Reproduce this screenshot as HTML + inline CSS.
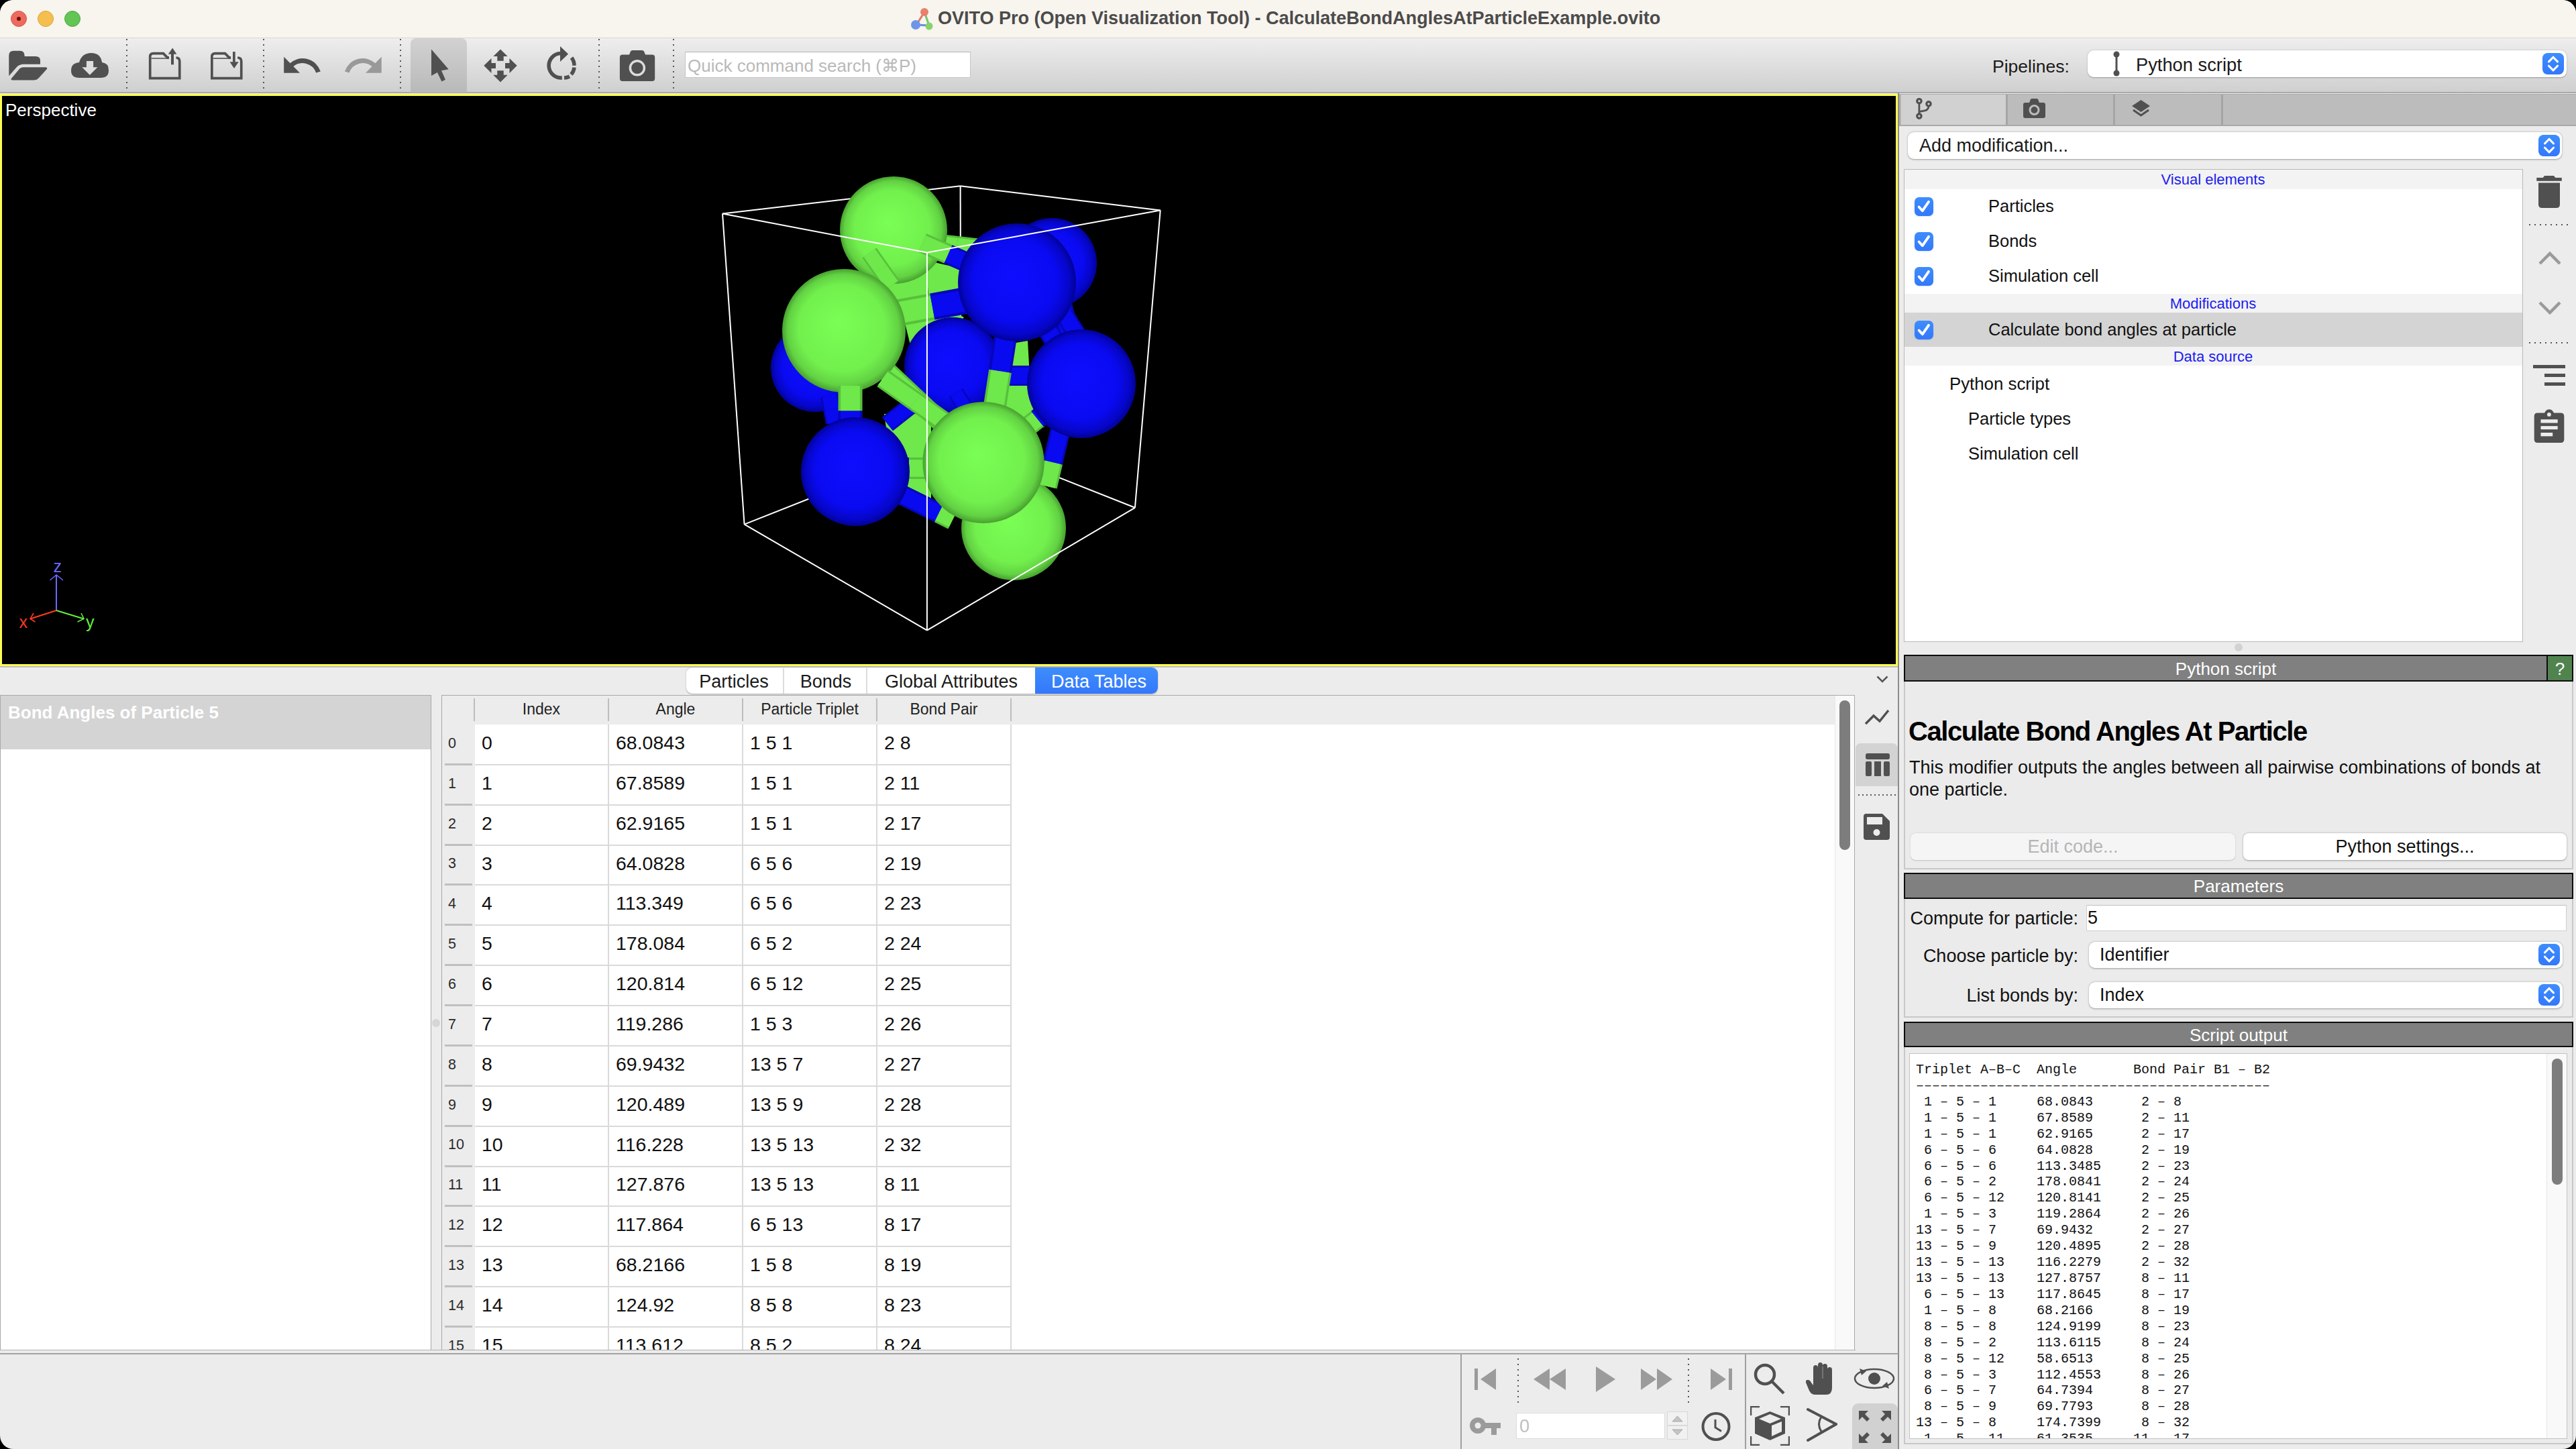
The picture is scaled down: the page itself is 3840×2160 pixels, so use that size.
<!DOCTYPE html><html><head><meta charset="utf-8"><style>
html,body{margin:0;padding:0;background:#000;width:3840px;height:2160px;overflow:hidden}
#win{position:absolute;left:0;top:0;width:3840px;height:2160px;border-radius:20px;overflow:hidden;background:#ececec;font-family:'Liberation Sans', sans-serif}
.t{position:absolute;white-space:pre}
.r{position:absolute}
</style></head><body><div id="win">
<div class="r" style="left:0px;top:0px;width:3840px;height:56px;background:#f8f4ee"></div>
<div class="r" style="left:0px;top:56px;width:3840px;height:1px;background:#d9d6d1"></div>
<div class="r" style="left:16px;top:16px;width:24px;height:24px;background:#ee6a5f;border-radius:50%;box-sizing:border-box;border:1px solid #d1574c"></div>
<div class="r" style="left:56px;top:16px;width:24px;height:24px;background:#f5bf4f;border-radius:50%;box-sizing:border-box;border:1px solid #d9a23a"></div>
<div class="r" style="left:96px;top:16px;width:24px;height:24px;background:#62c554;border-radius:50%;box-sizing:border-box;border:1px solid #4ea83f"></div>
<div class="r" style="left:25px;top:25px;width:6px;height:6px;background:#6a100c;border-radius:50%"></div>
<svg class="r" style="left:1356px;top:10px" width="36" height="36" viewBox="0 0 36 36"><line x1="22" y1="8" x2="10" y2="27" stroke="#e07a6a" stroke-width="3"/><line x1="22" y1="8" x2="29" y2="28" stroke="#7ac070" stroke-width="3"/><line x1="10" y1="27" x2="29" y2="28" stroke="#6a8fd8" stroke-width="3"/><circle cx="22" cy="8" r="6" fill="#e8806e"/><circle cx="9" cy="27" r="7" fill="#6e96e8"/><circle cx="29" cy="29" r="5.5" fill="#86d36e"/></svg>
<div class="t" style="left:1398px;top:14.1px;font-size:27px;line-height:27px;color:#4b4b4b;font-weight:bold;font-family:'Liberation Sans', sans-serif;">OVITO Pro (Open Visualization Tool) - CalculateBondAnglesAtParticleExample.ovito</div>
<div class="r" style="left:0px;top:57px;width:3840px;height:81px;background:linear-gradient(#eeeeee,#cfcfcf)"></div>
<div class="r" style="left:0px;top:137px;width:3840px;height:2px;background:#a9a9a9"></div>
<div class="r" style="left:612px;top:57px;width:84px;height:81px;background:linear-gradient(#d2d2d2,#b9b9b9);border-radius:8px 8px 0 0"></div>
<div class="r" style="left:188px;top:58px;width:2px;height:78px;background:repeating-linear-gradient(#555 0 2px,transparent 2px 8px)"></div>
<div class="r" style="left:392px;top:58px;width:2px;height:78px;background:repeating-linear-gradient(#555 0 2px,transparent 2px 8px)"></div>
<div class="r" style="left:596px;top:58px;width:2px;height:78px;background:repeating-linear-gradient(#555 0 2px,transparent 2px 8px)"></div>
<div class="r" style="left:892px;top:58px;width:2px;height:78px;background:repeating-linear-gradient(#555 0 2px,transparent 2px 8px)"></div>
<div class="r" style="left:1003px;top:58px;width:2px;height:78px;background:repeating-linear-gradient(#555 0 2px,transparent 2px 8px)"></div>
<svg class="r" style="left:13px;top:75px" width="58" height="46" viewBox="0 0 58 46"><path d="M0.3 8 Q0.3 0.8 7.3 0.8 L17 0.8 Q23.7 0.8 23.7 8.9 L40 8.9 Q47 8.9 47 15 L47 20.7 L21.2 20.7 Q15 21 11.5 25.6 L0.3 38.2 Z" fill="#505050"/><path d="M22 25.3 L55.5 25.3 Q58.3 25.8 56.6 28.2 L45 41 Q41.8 44.5 37 44.5 L5.5 44.5 Q2.3 44.3 4.2 41.8 L14.5 29.5 Q17.5 25.3 22 25.3 Z" fill="#505050"/></svg>
<svg class="r" style="left:106px;top:79px" width="56" height="37" viewBox="0 0 56 37"><path d="M12 37 Q0 37 0 26 Q0 15 12 14 Q16 0 30 0 Q44 0 46 14 Q56 15 56 26 Q56 37 44 37 Z" fill="#505050"/><path d="M22.9 11.9 L33.1 11.9 L33.1 21.3 L39.4 21.3 L27.8 32.8 L16.3 21.3 L22.9 21.3 Z" fill="#dedede"/></svg>
<svg class="r" style="left:210px;top:60px" width="160" height="70" viewBox="0 0 160 70"><g fill="none" stroke="#505050" stroke-width="3.7"><path d="M52.5 26 Q57.75 26 57.75 31.5 L57.75 56.6 L13.7 56.6 L13.7 24.5 Q13.7 19.6 18.6 19.6 L33.4 19.6 L39.6 25.8 L41.7 25.8"/><path d="M144.1 26 Q149.75 26 149.75 31.5 L149.75 56.6 L105.85 56.6 L105.85 24.5 Q105.85 19.6 110.75 19.6 L125.5 19.6 L131.6 25.8 L133.9 25.8"/></g><g stroke="#505050" stroke-width="1.6"><line x1="15.5" y1="27" x2="41.7" y2="27"/><line x1="107.5" y1="27" x2="133.9" y2="27"/></g><g fill="#505050"><rect x="39.5" y="24" width="2.4" height="3.8"/><rect x="131.6" y="24" width="2.5" height="3.8"/><rect x="45" y="20" width="4" height="16.3"/><path d="M40.7 20.8 L47.2 11.5 L53.4 20.8 Z"/><rect x="137" y="17.1" width="3.7" height="15.6"/><path d="M132.6 32.3 L145.7 32.3 L139 41.9 Z"/></g></svg>
<svg class="r" style="left:410px;top:60px" width="170" height="70" viewBox="0 0 170 70"><path d="M13.2 24.7 L13.2 48.8 L37 48.8 Z" fill="#505050"/><path d="M23.5 37.8 A24.8 24.8 0 0 1 64.5 47.5" fill="none" stroke="#505050" stroke-width="7"/><path d="M158.7 24.7 L158.7 48.8 L135 48.8 Z" fill="#999"/><path d="M148.2 37.8 A24.8 24.8 0 0 0 107.2 47.5" fill="none" stroke="#999" stroke-width="7"/></svg>
<svg class="r" style="left:630px;top:60px" width="240" height="70" viewBox="0 0 240 70"><g transform="translate(-630,-60)"><path d="M643 73.5 L668.7 103.3 L658 105.2 L664 118.7 L658.4 121.5 L651.9 108 L643 113.1 Z" fill="#505050"/><path d="M746 73.5 L756.7 84 L750.7 84 L750.7 90.7 L741.3 90.7 L741.3 84 L735.3 84 Z M721.3 97.7 L732.5 87 L732.5 94 L739 94 L739 102 L732.5 102 L732.5 108.9 Z M770.7 97.7 L759.5 87 L759.5 94 L753 94 L753 102 L759.5 102 L759.5 108.9 Z M746 122.4 L735.3 111.7 L741.3 111.7 L741.3 105.2 L750.7 105.2 L750.7 111.7 L756.7 111.7 Z" fill="#505050"/><path d="M835 79.5 A18.2 18.2 0 1 0 837.8 115.9" fill="none" stroke="#505050" stroke-width="5.6"/><path d="M852 86 A18.2 18.2 0 0 1 856 97.7 M856 100.5 A18.2 18.2 0 0 1 851.5 111 M849 114 A18.2 18.2 0 0 1 841 116" fill="none" stroke="#505050" stroke-width="5.6"/><path d="M835 68.9 L847.1 80.5 L835 92.1 Z" fill="#505050"/></g></svg>
<svg class="r" style="left:910px;top:65px" width="80" height="65" viewBox="0 0 80 65"><path d="M17.9 16.4 L28 16.4 L30 11.5 Q30.7 9.9 33 9.9 L47 9.9 Q49.3 9.9 50 11.5 L52 16.4 L62.2 16.4 Q66.2 16.4 66.2 20.4 L66.2 51.9 Q66.2 55.9 62.2 55.9 L17.9 55.9 Q13.9 55.9 13.9 51.9 L13.9 20.4 Q13.9 16.4 17.9 16.4 Z" fill="#505050"/><circle cx="39.9" cy="36.3" r="10.5" fill="none" stroke="#dcdcdc" stroke-width="3.5"/></svg>
<div class="r" style="left:1021px;top:77px;width:426px;height:39px;background:#fff;box-sizing:border-box;border:1px solid #c6c6c6;border-top-color:#b5b5b5"></div>
<div class="t" style="left:1025px;top:85.0px;font-size:26px;line-height:26px;color:#b9b9b9;font-weight:normal;font-family:'Liberation Sans', sans-serif;">Quick command search (&#8984;P)</div>
<div class="t" style="left:2970px;top:85.6px;font-size:26.5px;line-height:26.5px;color:#1a1a1a;font-weight:normal;font-family:'Liberation Sans', sans-serif;">Pipelines:</div>
<div class="r" style="left:3112px;top:75px;width:714px;height:40px;background:#fff;border-radius:9px;box-shadow:0 0.5px 2px rgba(0,0,0,0.3)"></div>
<svg class="r" style="left:3145px;top:76px" width="20" height="38" viewBox="0 0 20 38"><line x1="10" y1="5" x2="10" y2="33" stroke="#505050" stroke-width="3"/><circle cx="10" cy="5" r="4.5" fill="#505050"/><circle cx="10" cy="33" r="4.5" fill="#505050"/></svg>
<div class="t" style="left:3184px;top:82.9px;font-size:27.3px;line-height:27.3px;color:#1a1a1a;font-weight:normal;font-family:'Liberation Sans', sans-serif;">Python script</div>
<div class="r" style="left:3790px;top:79px;width:32px;height:32px;background:linear-gradient(#3e8dfd,#3378fb);border-radius:7.5px"></div>
<svg class="r" style="left:3790px;top:79px" width="32" height="32" viewBox="0 0 32 32"><path d="M9.5 12.9 L16 6.2 L22.5 12.9 M9.5 19.2 L16 25.9 L22.5 19.2" fill="none" stroke="#fff" stroke-width="3" stroke-linecap="round" stroke-linejoin="round"/></svg>
<div class="r" style="left:0px;top:140px;width:2829px;height:853px;background:#ffff55"></div>
<div class="r" style="left:3px;top:143px;width:2823px;height:847px;background:#000"></div>
<div class="t" style="left:8px;top:151.0px;font-size:26px;line-height:26px;color:#fff;font-weight:normal;font-family:'Liberation Sans', sans-serif;">Perspective</div>
<div class="r" style="left:0px;top:993px;width:2829px;height:2px;background:#bcbcbc"></div>
<div class="r" style="left:0px;top:995px;width:2829px;height:1px;background:#f2f2f2"></div>
<svg class="r" style="left:0;top:0" width="2829" height="993" viewBox="0 0 2829 993"><defs><clipPath id="vpc"><rect x="3" y="143" width="2823" height="847"/></clipPath></defs><g clip-path="url(#vpc)"><defs>
<radialGradient id="gG" cx="0.5" cy="0.5" r="0.5" fx="0.45" fy="0.43"><stop offset="0" stop-color="#7aff55"/><stop offset="0.7" stop-color="#72f04d"/><stop offset="0.9" stop-color="#62d243"/><stop offset="1" stop-color="#48a030"/></radialGradient>
<radialGradient id="gB" cx="0.5" cy="0.5" r="0.5" fx="0.45" fy="0.43"><stop offset="0" stop-color="#0e0eff"/><stop offset="0.7" stop-color="#0a0af2"/><stop offset="0.9" stop-color="#0606c8"/><stop offset="1" stop-color="#020296"/></radialGradient>
</defs><line x1="1431.6" y1="277.3" x2="1432.5" y2="654" stroke="#fff" stroke-width="2"/><line x1="1432.5" y1="654" x2="1109.6" y2="781.6" stroke="#fff" stroke-width="2"/><line x1="1432.5" y1="654" x2="1691.9" y2="756.8" stroke="#fff" stroke-width="2"/><line x1="1077" y1="318.5" x2="1431.6" y2="277.3" stroke="#fff" stroke-width="2"/><line x1="1431.6" y1="277.3" x2="1729.7" y2="313.5" stroke="#fff" stroke-width="2"/><polygon points="1343,458 1388,448 1437,473 1417,498 1358,518" fill="#6ee84a"/><polygon points="1318,420 1345,416 1382,405 1384,452 1340,454" fill="#6ee84a"/><polygon points="1380,388 1432,400 1432,432 1384,442" fill="#6ee84a"/><polygon points="1472,518 1532,508 1537,598 1557,637 1487,617" fill="#6ee84a"/><polygon points="1318,617 1388,617 1388,761 1338,751 1328,687" fill="#6ee84a"/><line x1="1568" y1="392" x2="1590.0" y2="482.0" stroke="#0606b8" stroke-width="30"/><line x1="1590.0" y1="482.0" x2="1612" y2="572" stroke="#0606b8" stroke-width="30"/><line x1="1568" y1="392" x2="1590.0" y2="482.0" stroke="#0a0af0" stroke-width="24.0"/><line x1="1590.0" y1="482.0" x2="1612" y2="572" stroke="#0a0af0" stroke-width="24.0"/><circle cx="1568" cy="392" r="67" fill="url(#gB)"/><circle cx="1215" cy="548" r="66" fill="url(#gB)"/><line x1="1236" y1="590" x2="1240.0" y2="610.0" stroke="#0606b8" stroke-width="26"/><line x1="1240.0" y1="610.0" x2="1244" y2="630" stroke="#0606b8" stroke-width="26"/><line x1="1236" y1="590" x2="1240.0" y2="610.0" stroke="#0a0af0" stroke-width="20.8"/><line x1="1240.0" y1="610.0" x2="1244" y2="630" stroke="#0a0af0" stroke-width="20.8"/><circle cx="1420" cy="545" r="72" fill="url(#gB)"/><circle cx="1511" cy="787" r="78" fill="url(#gG)"/><line x1="1323" y1="632" x2="1339.5" y2="619.0" stroke="#0606b8" stroke-width="26"/><line x1="1339.5" y1="619.0" x2="1356" y2="606" stroke="#0606b8" stroke-width="26"/><line x1="1323" y1="632" x2="1339.5" y2="619.0" stroke="#0a0af0" stroke-width="20.8"/><line x1="1339.5" y1="619.0" x2="1356" y2="606" stroke="#0a0af0" stroke-width="20.8"/><line x1="1425" y1="585" x2="1432.5" y2="597.5" stroke="#0606b8" stroke-width="24"/><line x1="1432.5" y1="597.5" x2="1440" y2="610" stroke="#0606b8" stroke-width="24"/><line x1="1425" y1="585" x2="1432.5" y2="597.5" stroke="#0a0af0" stroke-width="19.2"/><line x1="1432.5" y1="597.5" x2="1440" y2="610" stroke="#0a0af0" stroke-width="19.2"/><line x1="1383" y1="362" x2="1426.5" y2="367.0" stroke="#58c03c" stroke-width="30"/><line x1="1426.5" y1="367.0" x2="1470" y2="372" stroke="#58c03c" stroke-width="30"/><line x1="1383" y1="362" x2="1426.5" y2="367.0" stroke="#6ee84a" stroke-width="24.0"/><line x1="1426.5" y1="367.0" x2="1470" y2="372" stroke="#6ee84a" stroke-width="24.0"/><line x1="1586" y1="468" x2="1596.0" y2="484.0" stroke="#0606b8" stroke-width="28"/><line x1="1596.0" y1="484.0" x2="1606" y2="500" stroke="#0606b8" stroke-width="28"/><line x1="1586" y1="468" x2="1596.0" y2="484.0" stroke="#0a0af0" stroke-width="22.4"/><line x1="1596.0" y1="484.0" x2="1606" y2="500" stroke="#0a0af0" stroke-width="22.4"/><line x1="1500" y1="560" x2="1520.0" y2="560.0" stroke="#0606b8" stroke-width="30"/><line x1="1520.0" y1="560.0" x2="1540" y2="560" stroke="#0606b8" stroke-width="30"/><line x1="1500" y1="560" x2="1520.0" y2="560.0" stroke="#0a0af0" stroke-width="24.0"/><line x1="1520.0" y1="560.0" x2="1540" y2="560" stroke="#0a0af0" stroke-width="24.0"/><line x1="1516" y1="419" x2="1564.0" y2="495.5" stroke="#0606b8" stroke-width="30"/><line x1="1564.0" y1="495.5" x2="1612" y2="572" stroke="#0606b8" stroke-width="30"/><line x1="1516" y1="419" x2="1564.0" y2="495.5" stroke="#0a0af0" stroke-width="24.0"/><line x1="1564.0" y1="495.5" x2="1612" y2="572" stroke="#0a0af0" stroke-width="24.0"/><line x1="1612" y1="572" x2="1546.3" y2="624.65" stroke="#0606b8" stroke-width="30"/><line x1="1546.3" y1="624.65" x2="1466" y2="689" stroke="#58c03c" stroke-width="30"/><line x1="1612" y1="572" x2="1546.3" y2="624.65" stroke="#0a0af0" stroke-width="24.0"/><line x1="1546.3" y1="624.65" x2="1466" y2="689" stroke="#6ee84a" stroke-width="24.0"/><line x1="1581" y1="640" x2="1569.4" y2="689.3" stroke="#0606b8" stroke-width="30"/><line x1="1569.4" y1="689.3" x2="1561" y2="725" stroke="#58c03c" stroke-width="30"/><line x1="1581" y1="640" x2="1569.4" y2="689.3" stroke="#0a0af0" stroke-width="24.0"/><line x1="1569.4" y1="689.3" x2="1561" y2="725" stroke="#6ee84a" stroke-width="24.0"/><line x1="1274" y1="703" x2="1399.56" y2="764.92" stroke="#0606b8" stroke-width="30"/><line x1="1399.56" y1="764.92" x2="1420" y2="775" stroke="#58c03c" stroke-width="30"/><line x1="1274" y1="703" x2="1399.56" y2="764.92" stroke="#0a0af0" stroke-width="24.0"/><line x1="1399.56" y1="764.92" x2="1420" y2="775" stroke="#6ee84a" stroke-width="24.0"/><line x1="1258" y1="493" x2="1362.0" y2="591.0" stroke="#58c03c" stroke-width="30"/><line x1="1362.0" y1="591.0" x2="1466" y2="689" stroke="#58c03c" stroke-width="30"/><line x1="1258" y1="493" x2="1362.0" y2="591.0" stroke="#6ee84a" stroke-width="24.0"/><line x1="1362.0" y1="591.0" x2="1466" y2="689" stroke="#6ee84a" stroke-width="24.0"/><circle cx="1332" cy="343" r="80" fill="url(#gG)"/><line x1="1296" y1="377" x2="1313.0" y2="401.0" stroke="#58c03c" stroke-width="26"/><line x1="1313.0" y1="401.0" x2="1330" y2="425" stroke="#58c03c" stroke-width="26"/><line x1="1296" y1="377" x2="1313.0" y2="401.0" stroke="#6ee84a" stroke-width="20.8"/><line x1="1313.0" y1="401.0" x2="1330" y2="425" stroke="#6ee84a" stroke-width="20.8"/><line x1="1375" y1="362" x2="1413.5" y2="379.0" stroke="#58c03c" stroke-width="30"/><line x1="1413.5" y1="379.0" x2="1452" y2="396" stroke="#0606b8" stroke-width="30"/><line x1="1375" y1="362" x2="1413.5" y2="379.0" stroke="#6ee84a" stroke-width="24.0"/><line x1="1413.5" y1="379.0" x2="1452" y2="396" stroke="#0a0af0" stroke-width="24.0"/><line x1="1330" y1="468" x2="1389.8" y2="457.08" stroke="#58c03c" stroke-width="40"/><line x1="1389.8" y1="457.08" x2="1445" y2="447" stroke="#0606b8" stroke-width="40"/><line x1="1330" y1="468" x2="1389.8" y2="457.08" stroke="#6ee84a" stroke-width="32.0"/><line x1="1389.8" y1="457.08" x2="1445" y2="447" stroke="#0a0af0" stroke-width="32.0"/><line x1="1500" y1="495" x2="1490.99" y2="553.3" stroke="#0606b8" stroke-width="34"/><line x1="1490.99" y1="553.3" x2="1483" y2="605" stroke="#58c03c" stroke-width="34"/><line x1="1500" y1="495" x2="1490.99" y2="553.3" stroke="#0a0af0" stroke-width="27.2"/><line x1="1490.99" y1="553.3" x2="1483" y2="605" stroke="#6ee84a" stroke-width="27.2"/><circle cx="1516" cy="421" r="88" fill="url(#gB)"/><circle cx="1612" cy="572" r="81" fill="url(#gB)"/><circle cx="1258" cy="493" r="92" fill="url(#gG)"/><line x1="1267.5" y1="575" x2="1267.5" y2="612.5" stroke="#58c03c" stroke-width="36"/><line x1="1267.5" y1="612.5" x2="1267.5" y2="650" stroke="#0606b8" stroke-width="36"/><line x1="1267.5" y1="575" x2="1267.5" y2="612.5" stroke="#6ee84a" stroke-width="28.8"/><line x1="1267.5" y1="612.5" x2="1267.5" y2="650" stroke="#0a0af0" stroke-width="28.8"/><line x1="1316" y1="564" x2="1364.0" y2="598.0" stroke="#58c03c" stroke-width="30"/><line x1="1364.0" y1="598.0" x2="1412" y2="632" stroke="#58c03c" stroke-width="30"/><line x1="1316" y1="564" x2="1364.0" y2="598.0" stroke="#6ee84a" stroke-width="24.0"/><line x1="1364.0" y1="598.0" x2="1412" y2="632" stroke="#6ee84a" stroke-width="24.0"/><line x1="1320" y1="698" x2="1355.0" y2="698.0" stroke="#0606b8" stroke-width="32"/><line x1="1355.0" y1="698.0" x2="1390" y2="698" stroke="#58c03c" stroke-width="32"/><line x1="1320" y1="698" x2="1355.0" y2="698.0" stroke="#0a0af0" stroke-width="25.6"/><line x1="1355.0" y1="698.0" x2="1390" y2="698" stroke="#6ee84a" stroke-width="25.6"/><circle cx="1275" cy="703" r="81" fill="url(#gB)"/><circle cx="1466" cy="689.5" r="90.6" fill="url(#gG)"/><line x1="1077" y1="318.5" x2="1381.9" y2="376.6" stroke="#fff" stroke-width="2"/><line x1="1381.9" y1="376.6" x2="1729.7" y2="313.5" stroke="#fff" stroke-width="2"/><line x1="1381.9" y1="376.6" x2="1381.9" y2="939.6" stroke="#fff" stroke-width="2"/><line x1="1077" y1="318.5" x2="1109.6" y2="781.6" stroke="#fff" stroke-width="2"/><line x1="1729.7" y1="313.5" x2="1691.9" y2="756.8" stroke="#fff" stroke-width="2"/><line x1="1109.6" y1="781.6" x2="1381.9" y2="939.6" stroke="#fff" stroke-width="2"/><line x1="1381.9" y1="939.6" x2="1691.9" y2="756.8" stroke="#fff" stroke-width="2"/></g></svg>
<svg class="r" style="left:20px;top:835px" width="130" height="110" viewBox="0 0 130 110"><g transform="translate(-20,-835)"><line x1="84" y1="910" x2="84" y2="857" stroke="#6a6aff" stroke-width="2"/><path d="M74.5 865 L84 857 L94 865" fill="none" stroke="#6a6aff" stroke-width="1.5"/><line x1="84" y1="910" x2="45" y2="922.5" stroke="#ff3a22" stroke-width="2"/><path d="M50 914 L45 922.5 L52.5 927" fill="none" stroke="#ff3a22" stroke-width="1.5"/><line x1="84" y1="910" x2="125" y2="922.5" stroke="#66f03a" stroke-width="2"/><path d="M121 914 L125 922.5 L115.5 927" fill="none" stroke="#66f03a" stroke-width="1.5"/></g></svg>
<div class="t" style="left:79.5px;top:831.8px;font-size:25px;line-height:25px;color:#6a6aff;font-weight:normal;font-family:'Liberation Sans', sans-serif;">z</div>
<div class="t" style="left:28.5px;top:914.8px;font-size:25px;line-height:25px;color:#ff3a22;font-weight:normal;font-family:'Liberation Sans', sans-serif;">x</div>
<div class="t" style="left:128px;top:914.8px;font-size:25px;line-height:25px;color:#66f03a;font-weight:normal;font-family:'Liberation Sans', sans-serif;">y</div>
<div class="r" style="left:2829px;top:138px;width:2px;height:2022px;background:#8c8c8c"></div>
<div class="r" style="left:2831px;top:140px;width:1009px;height:48px;background:#a9a9a9"></div>
<div class="r" style="left:2833px;top:141px;width:1007px;height:45px;background:#bcbcbc"></div>
<div class="r" style="left:2834px;top:141px;width:156px;height:45px;background:#d1d1d1"></div>
<div class="r" style="left:2990px;top:141px;width:3px;height:45px;background:#a5a5a5"></div>
<div class="r" style="left:3150px;top:141px;width:3px;height:45px;background:#a5a5a5"></div>
<div class="r" style="left:3311px;top:141px;width:3px;height:45px;background:#a5a5a5"></div>
<svg class="r" style="left:2840px;top:140px" width="60" height="50" viewBox="0 0 60 50"><g fill="none" stroke="#505050"><line x1="20.9" y1="13.8" x2="20.9" y2="30" stroke-width="2.8"/><path d="M35 17 Q35 23.8 29.5 24.8 L21.5 26.3" stroke-width="2.8"/><circle cx="20.9" cy="10.7" r="3.2" stroke-width="3.2"/><circle cx="35" cy="14.8" r="3.2" stroke-width="3.2"/><circle cx="20.9" cy="33.1" r="3.2" stroke-width="3.2"/></g></svg>
<svg class="r" style="left:3016px;top:147px" width="33" height="29" viewBox="0 0 33 29"><path d="M3 6 L9 6 L11 1 Q12 0 13 0 L20 0 Q21 0 22 1 L24 6 L30 6 Q33 6 33 9 L33 26 Q33 29 30 29 L3 29 Q0 29 0 26 L0 9 Q0 6 3 6 Z" fill="#505050"/><circle cx="16.5" cy="17" r="6.5" fill="none" stroke="#bcbcbc" stroke-width="3"/></svg>
<svg class="r" style="left:3178px;top:149px" width="27" height="26" viewBox="0 0 27 26"><path d="M13.5 0 L27 9 L13.5 18 L0 9 Z" fill="#505050"/><path d="M2 15 L13.5 23 L25 15" fill="none" stroke="#505050" stroke-width="3"/></svg>
<div class="r" style="left:2844px;top:197px;width:975px;height:40px;background:#fff;border-radius:9px;box-shadow:0 0.5px 2.5px rgba(0,0,0,0.35)"></div>
<div class="t" style="left:2861px;top:204.1px;font-size:27px;line-height:27px;color:#1a1a1a;font-weight:normal;font-family:'Liberation Sans', sans-serif;">Add modification...</div>
<div class="r" style="left:3784px;top:201px;width:32px;height:32px;background:linear-gradient(#3e8dfd,#3378fb);border-radius:7.5px"></div>
<svg class="r" style="left:3784px;top:201px" width="32" height="32" viewBox="0 0 32 32"><path d="M9.5 12.9 L16 6.2 L22.5 12.9 M9.5 19.2 L16 25.9 L22.5 19.2" fill="none" stroke="#fff" stroke-width="3" stroke-linecap="round" stroke-linejoin="round"/></svg>
<div class="r" style="left:2838px;top:252px;width:923px;height:705px;background:#fff;box-sizing:border-box;border:1px solid #b9b9b9"></div>
<div class="r" style="left:2839px;top:253px;width:921px;height:29px;background:#f3f3f3"></div>
<div class="t" style="left:2899.0px;width:800px;text-align:center;top:257.4px;font-size:22px;line-height:22px;color:#1c1cf0;font-weight:normal;">Visual elements</div>
<div class="r" style="left:2839px;top:438px;width:921px;height:28px;background:#f3f3f3"></div>
<div class="t" style="left:2899.0px;width:800px;text-align:center;top:442.4px;font-size:22px;line-height:22px;color:#1c1cf0;font-weight:normal;">Modifications</div>
<div class="r" style="left:2839px;top:466px;width:921px;height:51px;background:#d4d4d4"></div>
<div class="r" style="left:2839px;top:517px;width:921px;height:28px;background:#f3f3f3"></div>
<div class="t" style="left:2899.0px;width:800px;text-align:center;top:521.4px;font-size:22px;line-height:22px;color:#1c1cf0;font-weight:normal;">Data source</div>
<div class="r" style="left:2854px;top:294px;width:28px;height:28px;background:linear-gradient(#3e8dfd,#3378fb);border-radius:6.5px;box-shadow:0 1px 2px rgba(40,110,250,0.18)"></div>
<svg class="r" style="left:2854px;top:294px" width="28" height="28" viewBox="0 0 28 28"><path d="M6.6 14.4 L11.8 20.2 L21 6.8" fill="none" stroke="#fff" stroke-width="3.8" stroke-linecap="round" stroke-linejoin="round"/></svg>
<div class="t" style="left:2964px;top:295.4px;font-size:25.5px;line-height:25.5px;color:#111;font-weight:normal;font-family:'Liberation Sans', sans-serif;">Particles</div>
<div class="r" style="left:2854px;top:346px;width:28px;height:28px;background:linear-gradient(#3e8dfd,#3378fb);border-radius:6.5px;box-shadow:0 1px 2px rgba(40,110,250,0.18)"></div>
<svg class="r" style="left:2854px;top:346px" width="28" height="28" viewBox="0 0 28 28"><path d="M6.6 14.4 L11.8 20.2 L21 6.8" fill="none" stroke="#fff" stroke-width="3.8" stroke-linecap="round" stroke-linejoin="round"/></svg>
<div class="t" style="left:2964px;top:347.4px;font-size:25.5px;line-height:25.5px;color:#111;font-weight:normal;font-family:'Liberation Sans', sans-serif;">Bonds</div>
<div class="r" style="left:2854px;top:398px;width:28px;height:28px;background:linear-gradient(#3e8dfd,#3378fb);border-radius:6.5px;box-shadow:0 1px 2px rgba(40,110,250,0.18)"></div>
<svg class="r" style="left:2854px;top:398px" width="28" height="28" viewBox="0 0 28 28"><path d="M6.6 14.4 L11.8 20.2 L21 6.8" fill="none" stroke="#fff" stroke-width="3.8" stroke-linecap="round" stroke-linejoin="round"/></svg>
<div class="t" style="left:2964px;top:399.4px;font-size:25.5px;line-height:25.5px;color:#111;font-weight:normal;font-family:'Liberation Sans', sans-serif;">Simulation cell</div>
<div class="r" style="left:2854px;top:478px;width:28px;height:28px;background:linear-gradient(#3e8dfd,#3378fb);border-radius:6.5px;box-shadow:0 1px 2px rgba(40,110,250,0.18)"></div>
<svg class="r" style="left:2854px;top:478px" width="28" height="28" viewBox="0 0 28 28"><path d="M6.6 14.4 L11.8 20.2 L21 6.8" fill="none" stroke="#fff" stroke-width="3.8" stroke-linecap="round" stroke-linejoin="round"/></svg>
<div class="t" style="left:2964px;top:479.4px;font-size:25.5px;line-height:25.5px;color:#111;font-weight:normal;font-family:'Liberation Sans', sans-serif;">Calculate bond angles at particle</div>
<div class="t" style="left:2906px;top:560.2px;font-size:25.8px;line-height:25.8px;color:#111;font-weight:normal;font-family:'Liberation Sans', sans-serif;">Python script</div>
<div class="t" style="left:2934px;top:612.4px;font-size:25.5px;line-height:25.5px;color:#111;font-weight:normal;font-family:'Liberation Sans', sans-serif;">Particle types</div>
<div class="t" style="left:2934px;top:664.4px;font-size:25.5px;line-height:25.5px;color:#111;font-weight:normal;font-family:'Liberation Sans', sans-serif;">Simulation cell</div>
<svg class="r" style="left:3780px;top:260px" width="40" height="52" viewBox="0 0 40 52"><rect x="1.3" y="4.9" width="37.5" height="4.9" fill="#505050"/><path d="M10.6 5 L13.1 1.9 L26.9 1.9 L29.4 5 Z" fill="#505050"/><path d="M4 12.6 L36 12.6 L36 44.4 Q36 49.9 30.5 49.9 L9.5 49.9 Q4 49.9 4 44.4 Z" fill="#505050"/></svg>
<div class="r" style="left:3770px;top:334px;width:62px;height:2px;background:repeating-linear-gradient(90deg,#555 0 2px,transparent 2px 8px)"></div>
<div class="r" style="left:3770px;top:510px;width:62px;height:2px;background:repeating-linear-gradient(90deg,#555 0 2px,transparent 2px 8px)"></div>
<svg class="r" style="left:3783px;top:372px" width="36" height="24" viewBox="0 0 36 24"><path d="M3 21 L18 6 L33 21" fill="none" stroke="#9a9a9a" stroke-width="4.5"/></svg>
<svg class="r" style="left:3783px;top:448px" width="36" height="24" viewBox="0 0 36 24"><path d="M3 3 L18 18 L33 3" fill="none" stroke="#9a9a9a" stroke-width="4.5"/></svg>
<svg class="r" style="left:3776px;top:544px" width="50" height="32" viewBox="0 0 50 32"><rect x="0" y="0" width="48" height="5" fill="#505050"/><rect x="17" y="13" width="31" height="5" fill="#505050"/><rect x="17" y="26" width="31" height="5" fill="#505050"/></svg>
<svg class="r" style="left:3776px;top:608px" width="48" height="54" viewBox="0 0 48 54"><path d="M6.7 7.5 L17 7.5 Q19.5 2.2 24 2.2 Q28.5 2.2 31 7.5 L41.3 7.5 Q46.3 7.5 46.3 12.5 L46.3 47 Q46.3 52 41.3 52 L6.7 52 Q1.7 52 1.7 47 L1.7 12.5 Q1.7 7.5 6.7 7.5 Z" fill="#505050"/><circle cx="23.9" cy="9.9" r="2.9" fill="#ececec"/><rect x="11.5" y="17.2" width="25.2" height="5.3" fill="#ececec"/><rect x="11.5" y="27.1" width="25.2" height="5" fill="#ececec"/><rect x="11.5" y="37" width="17.7" height="5.3" fill="#ececec"/></svg>
<div class="r" style="left:3331px;top:959px;width:12px;height:12px;background:#d2d2d2;border-radius:50%"></div>
<div class="r" style="left:2838px;top:976px;width:998px;height:40px;background:#808080;box-sizing:border-box;border:2px solid #0d0d0d"></div>
<div class="t" style="left:2918.0px;width:800px;text-align:center;top:983.5px;font-size:26px;line-height:26px;color:#fff;font-weight:normal;">Python script</div>
<div class="r" style="left:3796px;top:976px;width:40px;height:40px;background:#51834f;box-sizing:border-box;border:2px solid #0d0d0d"></div>
<div class="t" style="left:3416.0px;width:800px;text-align:center;top:983.5px;font-size:26px;line-height:26px;color:#fff;font-weight:normal;">?</div>
<div class="r" style="left:2838px;top:1016px;width:998px;height:280px;background:#ebebeb;box-sizing:border-box;border:2px solid #c8c8c8;border-top:none"></div>
<div class="t" style="left:2845px;top:1070.1px;font-size:40px;line-height:40px;color:#000;font-weight:bold;font-family:'Liberation Sans', sans-serif;letter-spacing:-1.45px">Calculate Bond Angles At Particle</div>
<div class="t" style="left:2846px;top:1131.1px;font-size:27px;line-height:27px;color:#111;font-weight:normal;font-family:'Liberation Sans', sans-serif;">This modifier outputs the angles between all pairwise combinations of bonds at</div>
<div class="t" style="left:2846px;top:1164.1px;font-size:27px;line-height:27px;color:#111;font-weight:normal;font-family:'Liberation Sans', sans-serif;">one particle.</div>
<div class="r" style="left:2848px;top:1242px;width:484px;height:40px;background:#f5f5f5;border-radius:8px;box-shadow:0 0.5px 2px rgba(0,0,0,0.18)"></div>
<div class="t" style="left:2690.0px;width:800px;text-align:center;top:1249.1px;font-size:27px;line-height:27px;color:#b5b5b5;font-weight:normal;">Edit code...</div>
<div class="r" style="left:3344px;top:1242px;width:482px;height:40px;background:#fff;border-radius:8px;box-shadow:0 0.5px 2.5px rgba(0,0,0,0.35)"></div>
<div class="t" style="left:3185.0px;width:800px;text-align:center;top:1249.1px;font-size:27px;line-height:27px;color:#111;font-weight:normal;">Python settings...</div>
<div class="r" style="left:2838px;top:1301px;width:998px;height:39px;background:#808080;box-sizing:border-box;border:2px solid #0d0d0d"></div>
<div class="t" style="left:2937.0px;width:800px;text-align:center;top:1308.0px;font-size:26px;line-height:26px;color:#fff;font-weight:normal;">Parameters</div>
<div class="r" style="left:2838px;top:1340px;width:998px;height:177px;background:#ebebeb;box-sizing:border-box;border:2px solid #c8c8c8;border-top:none"></div>
<div class="t" style="right:742px;text-align:right;top:1356.1px;font-size:27px;line-height:27px;color:#111;font-weight:normal;">Compute for particle:</div>
<div class="r" style="left:3110px;top:1349px;width:716px;height:39px;background:#fff;box-sizing:border-box;border:1px solid #d0d0d0;border-top-color:#c0c0c0"></div>
<div class="t" style="left:3112px;top:1355.1px;font-size:27px;line-height:27px;color:#111;font-weight:normal;font-family:'Liberation Sans', sans-serif;">5</div>
<div class="t" style="right:742px;text-align:right;top:1411.6px;font-size:27px;line-height:27px;color:#111;font-weight:normal;">Choose particle by:</div>
<div class="r" style="left:3114px;top:1404px;width:706px;height:39px;background:#fff;border-radius:9px;box-shadow:0 0.5px 2.5px rgba(0,0,0,0.35)"></div>
<div class="t" style="left:3130px;top:1410.1px;font-size:27px;line-height:27px;color:#111;font-weight:normal;font-family:'Liberation Sans', sans-serif;">Identifier</div>
<div class="r" style="left:3784px;top:1407px;width:32px;height:32px;background:linear-gradient(#3e8dfd,#3378fb);border-radius:7.5px"></div>
<svg class="r" style="left:3784px;top:1407px" width="32" height="32" viewBox="0 0 32 32"><path d="M9.5 12.9 L16 6.2 L22.5 12.9 M9.5 19.2 L16 25.9 L22.5 19.2" fill="none" stroke="#fff" stroke-width="3" stroke-linecap="round" stroke-linejoin="round"/></svg>
<div class="t" style="right:742px;text-align:right;top:1471.1px;font-size:27px;line-height:27px;color:#111;font-weight:normal;">List bonds by:</div>
<div class="r" style="left:3114px;top:1464px;width:706px;height:39px;background:#fff;border-radius:9px;box-shadow:0 0.5px 2.5px rgba(0,0,0,0.35)"></div>
<div class="t" style="left:3130px;top:1470.1px;font-size:27px;line-height:27px;color:#111;font-weight:normal;font-family:'Liberation Sans', sans-serif;">Index</div>
<div class="r" style="left:3784px;top:1467px;width:32px;height:32px;background:linear-gradient(#3e8dfd,#3378fb);border-radius:7.5px"></div>
<svg class="r" style="left:3784px;top:1467px" width="32" height="32" viewBox="0 0 32 32"><path d="M9.5 12.9 L16 6.2 L22.5 12.9 M9.5 19.2 L16 25.9 L22.5 19.2" fill="none" stroke="#fff" stroke-width="3" stroke-linecap="round" stroke-linejoin="round"/></svg>
<div class="r" style="left:2838px;top:1523px;width:998px;height:38px;background:#808080;box-sizing:border-box;border:2px solid #0d0d0d"></div>
<div class="t" style="left:2937.0px;width:800px;text-align:center;top:1529.5px;font-size:26px;line-height:26px;color:#fff;font-weight:normal;">Script output</div>
<div class="r" style="left:2838px;top:1561px;width:998px;height:592px;background:#ebebeb;box-sizing:border-box;border:2px solid #c8c8c8;border-top:none"></div>
<div class="r" style="left:2846px;top:1570px;width:981px;height:575px;background:#fff;box-sizing:border-box;border:1px solid #c2c2c2"></div>
<div class="r" style="left:3796px;top:1571px;width:29px;height:573px;background:#f9f9f9;border-left:1px solid #e6e6e6"></div>
<div class="r" style="left:3804px;top:1578px;width:16px;height:188px;background:#7d7d7d;border-radius:8px"></div>
<div class="r" style="left:2847px;top:1570px;width:948px;height:574px;overflow:hidden"><div class="t" style="left:9px;top:13px;font-family:'Liberation Mono', monospace;font-size:20px;line-height:23.92px;color:#111">Triplet A&#8211;B&#8211;C  Angle       Bond Pair B1 &#8211; B2
&#8211;&#8211;&#8211;&#8211;&#8211;&#8211;&#8211;&#8211;&#8211;&#8211;&#8211;&#8211;&#8211;&#8211;&#8211;&#8211;&#8211;&#8211;&#8211;&#8211;&#8211;&#8211;&#8211;&#8211;&#8211;&#8211;&#8211;&#8211;&#8211;&#8211;&#8211;&#8211;&#8211;&#8211;&#8211;&#8211;&#8211;&#8211;&#8211;&#8211;&#8211;&#8211;&#8211;&#8211;
 1 &#8211; 5 &#8211; 1     68.0843      2 &#8211; 8
 1 &#8211; 5 &#8211; 1     67.8589      2 &#8211; 11
 1 &#8211; 5 &#8211; 1     62.9165      2 &#8211; 17
 6 &#8211; 5 &#8211; 6     64.0828      2 &#8211; 19
 6 &#8211; 5 &#8211; 6     113.3485     2 &#8211; 23
 6 &#8211; 5 &#8211; 2     178.0841     2 &#8211; 24
 6 &#8211; 5 &#8211; 12    120.8141     2 &#8211; 25
 1 &#8211; 5 &#8211; 3     119.2864     2 &#8211; 26
13 &#8211; 5 &#8211; 7     69.9432      2 &#8211; 27
13 &#8211; 5 &#8211; 9     120.4895     2 &#8211; 28
13 &#8211; 5 &#8211; 13    116.2279     2 &#8211; 32
13 &#8211; 5 &#8211; 13    127.8757     8 &#8211; 11
 6 &#8211; 5 &#8211; 13    117.8645     8 &#8211; 17
 1 &#8211; 5 &#8211; 8     68.2166      8 &#8211; 19
 8 &#8211; 5 &#8211; 8     124.9199     8 &#8211; 23
 8 &#8211; 5 &#8211; 2     113.6115     8 &#8211; 24
 8 &#8211; 5 &#8211; 12    58.6513      8 &#8211; 25
 8 &#8211; 5 &#8211; 3     112.4553     8 &#8211; 26
 6 &#8211; 5 &#8211; 7     64.7394      8 &#8211; 27
 8 &#8211; 5 &#8211; 9     69.7793      8 &#8211; 28
13 &#8211; 5 &#8211; 8     174.7399     8 &#8211; 32
 1 &#8211; 5 &#8211; 11    61.3535     11 &#8211; 17</div></div>
<div class="r" style="left:1023px;top:995px;width:703px;height:39px;background:#fff;border-radius:9px;box-shadow:0 0.5px 2px rgba(0,0,0,0.3)"></div>
<div class="r" style="left:1543px;top:995px;width:183px;height:39px;background:linear-gradient(#3e8dfd,#3378fb);border-radius:0 9px 9px 0"></div>
<div class="r" style="left:1167px;top:996px;width:1.5px;height:38px;background:#dcdcdc"></div>
<div class="r" style="left:1291px;top:996px;width:1.5px;height:38px;background:#dcdcdc"></div>
<div class="t" style="left:944.0px;width:300px;text-align:center;top:1003.1px;font-size:27px;line-height:27px;color:#1a1a1a;font-weight:normal;">Particles</div>
<div class="t" style="left:1081.0px;width:300px;text-align:center;top:1003.1px;font-size:27px;line-height:27px;color:#1a1a1a;font-weight:normal;">Bonds</div>
<div class="t" style="left:1268.0px;width:300px;text-align:center;top:1003.1px;font-size:27px;line-height:27px;color:#1a1a1a;font-weight:normal;">Global Attributes</div>
<div class="t" style="left:1488.0px;width:300px;text-align:center;top:1003.1px;font-size:27px;line-height:27px;color:#fff;font-weight:normal;">Data Tables</div>
<svg class="r" style="left:2797px;top:1007px" width="18" height="12" viewBox="0 0 18 12"><path d="M1.5 1.5 L9 9 L16.5 1.5" fill="none" stroke="#555" stroke-width="2.5"/></svg>
<div class="r" style="left:0px;top:1036px;width:643px;height:977px;background:#fff;box-sizing:border-box;border:1px solid #a9a9a9"></div>
<div class="r" style="left:1px;top:1037px;width:641px;height:80px;background:#d4d4d4"></div>
<div class="t" style="left:12px;top:1049.0px;font-size:26px;line-height:26px;color:#fff;font-weight:bold;font-family:'Liberation Sans', sans-serif;">Bond Angles of Particle 5</div>
<div class="r" style="left:644px;top:1519px;width:12px;height:12px;background:#d6d6d6;border-radius:50%"></div>
<div class="r" style="left:658px;top:1036px;width:2107px;height:977px;background:#fff;box-sizing:border-box;border:1px solid #a9a9a9"></div>
<div class="r" style="left:659px;top:1037px;width:2076px;height:43px;background:#ececec"></div>
<div class="r" style="left:659px;top:1080px;width:49px;height:932px;background:#ececec"></div>
<div class="r" style="left:2735px;top:1037px;width:28px;height:975px;background:#f9f9f9;border-left:1px solid #e8e8e8"></div>
<div class="r" style="left:2742px;top:1044px;width:16px;height:223px;background:#7d7d7d;border-radius:8px"></div>
<div class="r" style="left:706px;top:1041px;width:2px;height:34px;background:#bdbdbd"></div>
<div class="r" style="left:906px;top:1041px;width:2px;height:34px;background:#bdbdbd"></div>
<div class="r" style="left:1106px;top:1041px;width:2px;height:34px;background:#bdbdbd"></div>
<div class="r" style="left:1306px;top:1041px;width:2px;height:34px;background:#bdbdbd"></div>
<div class="r" style="left:1506px;top:1041px;width:2px;height:34px;background:#bdbdbd"></div>
<div class="t" style="left:707.0px;width:200px;text-align:center;top:1046.0px;font-size:23px;line-height:23px;color:#222;font-weight:normal;">Index</div>
<div class="t" style="left:907.0px;width:200px;text-align:center;top:1046.0px;font-size:23px;line-height:23px;color:#222;font-weight:normal;">Angle</div>
<div class="t" style="left:1107.0px;width:200px;text-align:center;top:1046.0px;font-size:23px;line-height:23px;color:#222;font-weight:normal;">Particle Triplet</div>
<div class="t" style="left:1307.0px;width:200px;text-align:center;top:1046.0px;font-size:23px;line-height:23px;color:#222;font-weight:normal;">Bond Pair</div>
<div class="r" style="left:659px;top:1080px;width:2076px;height:932px;overflow:hidden">
<div class="r" style="left:49px;top:58.9px;width:800px;height:2px;background:#dadada"></div>
<div class="r" style="left:4px;top:57.9px;width:41px;height:3px;background:#bfbfbf"></div>
<div class="t" style="left:9px;top:17.8px;font-size:21.5px;line-height:21.5px;color:#2a2a2a">0</div>
<div class="t" style="left:59px;top:12.9px;font-size:28.5px;line-height:28.5px;color:#111">0</div>
<div class="t" style="left:259px;top:12.9px;font-size:28.5px;line-height:28.5px;color:#111">68.0843</div>
<div class="t" style="left:459px;top:12.9px;font-size:28.5px;line-height:28.5px;color:#111">1 5 1</div>
<div class="t" style="left:659px;top:12.9px;font-size:28.5px;line-height:28.5px;color:#111">2 8</div>
<div class="r" style="left:49px;top:118.7px;width:800px;height:2px;background:#dadada"></div>
<div class="r" style="left:4px;top:117.7px;width:41px;height:3px;background:#bfbfbf"></div>
<div class="t" style="left:9px;top:77.7px;font-size:21.5px;line-height:21.5px;color:#2a2a2a">1</div>
<div class="t" style="left:59px;top:72.7px;font-size:28.5px;line-height:28.5px;color:#111">1</div>
<div class="t" style="left:259px;top:72.7px;font-size:28.5px;line-height:28.5px;color:#111">67.8589</div>
<div class="t" style="left:459px;top:72.7px;font-size:28.5px;line-height:28.5px;color:#111">1 5 1</div>
<div class="t" style="left:659px;top:72.7px;font-size:28.5px;line-height:28.5px;color:#111">2 11</div>
<div class="r" style="left:49px;top:178.6px;width:800px;height:2px;background:#dadada"></div>
<div class="r" style="left:4px;top:177.6px;width:41px;height:3px;background:#bfbfbf"></div>
<div class="t" style="left:9px;top:137.5px;font-size:21.5px;line-height:21.5px;color:#2a2a2a">2</div>
<div class="t" style="left:59px;top:132.6px;font-size:28.5px;line-height:28.5px;color:#111">2</div>
<div class="t" style="left:259px;top:132.6px;font-size:28.5px;line-height:28.5px;color:#111">62.9165</div>
<div class="t" style="left:459px;top:132.6px;font-size:28.5px;line-height:28.5px;color:#111">1 5 1</div>
<div class="t" style="left:659px;top:132.6px;font-size:28.5px;line-height:28.5px;color:#111">2 17</div>
<div class="r" style="left:49px;top:238.4px;width:800px;height:2px;background:#dadada"></div>
<div class="r" style="left:4px;top:237.4px;width:41px;height:3px;background:#bfbfbf"></div>
<div class="t" style="left:9px;top:197.4px;font-size:21.5px;line-height:21.5px;color:#2a2a2a">3</div>
<div class="t" style="left:59px;top:192.5px;font-size:28.5px;line-height:28.5px;color:#111">3</div>
<div class="t" style="left:259px;top:192.5px;font-size:28.5px;line-height:28.5px;color:#111">64.0828</div>
<div class="t" style="left:459px;top:192.5px;font-size:28.5px;line-height:28.5px;color:#111">6 5 6</div>
<div class="t" style="left:659px;top:192.5px;font-size:28.5px;line-height:28.5px;color:#111">2 19</div>
<div class="r" style="left:49px;top:298.3px;width:800px;height:2px;background:#dadada"></div>
<div class="r" style="left:4px;top:297.3px;width:41px;height:3px;background:#bfbfbf"></div>
<div class="t" style="left:9px;top:257.2px;font-size:21.5px;line-height:21.5px;color:#2a2a2a">4</div>
<div class="t" style="left:59px;top:252.3px;font-size:28.5px;line-height:28.5px;color:#111">4</div>
<div class="t" style="left:259px;top:252.3px;font-size:28.5px;line-height:28.5px;color:#111">113.349</div>
<div class="t" style="left:459px;top:252.3px;font-size:28.5px;line-height:28.5px;color:#111">6 5 6</div>
<div class="t" style="left:659px;top:252.3px;font-size:28.5px;line-height:28.5px;color:#111">2 23</div>
<div class="r" style="left:49px;top:358.2px;width:800px;height:2px;background:#dadada"></div>
<div class="r" style="left:4px;top:357.2px;width:41px;height:3px;background:#bfbfbf"></div>
<div class="t" style="left:9px;top:317.1px;font-size:21.5px;line-height:21.5px;color:#2a2a2a">5</div>
<div class="t" style="left:59px;top:312.2px;font-size:28.5px;line-height:28.5px;color:#111">5</div>
<div class="t" style="left:259px;top:312.2px;font-size:28.5px;line-height:28.5px;color:#111">178.084</div>
<div class="t" style="left:459px;top:312.2px;font-size:28.5px;line-height:28.5px;color:#111">6 5 2</div>
<div class="t" style="left:659px;top:312.2px;font-size:28.5px;line-height:28.5px;color:#111">2 24</div>
<div class="r" style="left:49px;top:418.0px;width:800px;height:2px;background:#dadada"></div>
<div class="r" style="left:4px;top:417.0px;width:41px;height:3px;background:#bfbfbf"></div>
<div class="t" style="left:9px;top:377.0px;font-size:21.5px;line-height:21.5px;color:#2a2a2a">6</div>
<div class="t" style="left:59px;top:372.0px;font-size:28.5px;line-height:28.5px;color:#111">6</div>
<div class="t" style="left:259px;top:372.0px;font-size:28.5px;line-height:28.5px;color:#111">120.814</div>
<div class="t" style="left:459px;top:372.0px;font-size:28.5px;line-height:28.5px;color:#111">6 5 12</div>
<div class="t" style="left:659px;top:372.0px;font-size:28.5px;line-height:28.5px;color:#111">2 25</div>
<div class="r" style="left:49px;top:477.9px;width:800px;height:2px;background:#dadada"></div>
<div class="r" style="left:4px;top:476.9px;width:41px;height:3px;background:#bfbfbf"></div>
<div class="t" style="left:9px;top:436.8px;font-size:21.5px;line-height:21.5px;color:#2a2a2a">7</div>
<div class="t" style="left:59px;top:431.9px;font-size:28.5px;line-height:28.5px;color:#111">7</div>
<div class="t" style="left:259px;top:431.9px;font-size:28.5px;line-height:28.5px;color:#111">119.286</div>
<div class="t" style="left:459px;top:431.9px;font-size:28.5px;line-height:28.5px;color:#111">1 5 3</div>
<div class="t" style="left:659px;top:431.9px;font-size:28.5px;line-height:28.5px;color:#111">2 26</div>
<div class="r" style="left:49px;top:537.7px;width:800px;height:2px;background:#dadada"></div>
<div class="r" style="left:4px;top:536.7px;width:41px;height:3px;background:#bfbfbf"></div>
<div class="t" style="left:9px;top:496.7px;font-size:21.5px;line-height:21.5px;color:#2a2a2a">8</div>
<div class="t" style="left:59px;top:491.8px;font-size:28.5px;line-height:28.5px;color:#111">8</div>
<div class="t" style="left:259px;top:491.8px;font-size:28.5px;line-height:28.5px;color:#111">69.9432</div>
<div class="t" style="left:459px;top:491.8px;font-size:28.5px;line-height:28.5px;color:#111">13 5 7</div>
<div class="t" style="left:659px;top:491.8px;font-size:28.5px;line-height:28.5px;color:#111">2 27</div>
<div class="r" style="left:49px;top:597.6px;width:800px;height:2px;background:#dadada"></div>
<div class="r" style="left:4px;top:596.6px;width:41px;height:3px;background:#bfbfbf"></div>
<div class="t" style="left:9px;top:556.5px;font-size:21.5px;line-height:21.5px;color:#2a2a2a">9</div>
<div class="t" style="left:59px;top:551.6px;font-size:28.5px;line-height:28.5px;color:#111">9</div>
<div class="t" style="left:259px;top:551.6px;font-size:28.5px;line-height:28.5px;color:#111">120.489</div>
<div class="t" style="left:459px;top:551.6px;font-size:28.5px;line-height:28.5px;color:#111">13 5 9</div>
<div class="t" style="left:659px;top:551.6px;font-size:28.5px;line-height:28.5px;color:#111">2 28</div>
<div class="r" style="left:49px;top:657.5px;width:800px;height:2px;background:#dadada"></div>
<div class="r" style="left:4px;top:656.5px;width:41px;height:3px;background:#bfbfbf"></div>
<div class="t" style="left:9px;top:616.4px;font-size:21.5px;line-height:21.5px;color:#2a2a2a">10</div>
<div class="t" style="left:59px;top:611.5px;font-size:28.5px;line-height:28.5px;color:#111">10</div>
<div class="t" style="left:259px;top:611.5px;font-size:28.5px;line-height:28.5px;color:#111">116.228</div>
<div class="t" style="left:459px;top:611.5px;font-size:28.5px;line-height:28.5px;color:#111">13 5 13</div>
<div class="t" style="left:659px;top:611.5px;font-size:28.5px;line-height:28.5px;color:#111">2 32</div>
<div class="r" style="left:49px;top:717.3px;width:800px;height:2px;background:#dadada"></div>
<div class="r" style="left:4px;top:716.3px;width:41px;height:3px;background:#bfbfbf"></div>
<div class="t" style="left:9px;top:676.3px;font-size:21.5px;line-height:21.5px;color:#2a2a2a">11</div>
<div class="t" style="left:59px;top:671.3px;font-size:28.5px;line-height:28.5px;color:#111">11</div>
<div class="t" style="left:259px;top:671.3px;font-size:28.5px;line-height:28.5px;color:#111">127.876</div>
<div class="t" style="left:459px;top:671.3px;font-size:28.5px;line-height:28.5px;color:#111">13 5 13</div>
<div class="t" style="left:659px;top:671.3px;font-size:28.5px;line-height:28.5px;color:#111">8 11</div>
<div class="r" style="left:49px;top:777.2px;width:800px;height:2px;background:#dadada"></div>
<div class="r" style="left:4px;top:776.2px;width:41px;height:3px;background:#bfbfbf"></div>
<div class="t" style="left:9px;top:736.1px;font-size:21.5px;line-height:21.5px;color:#2a2a2a">12</div>
<div class="t" style="left:59px;top:731.2px;font-size:28.5px;line-height:28.5px;color:#111">12</div>
<div class="t" style="left:259px;top:731.2px;font-size:28.5px;line-height:28.5px;color:#111">117.864</div>
<div class="t" style="left:459px;top:731.2px;font-size:28.5px;line-height:28.5px;color:#111">6 5 13</div>
<div class="t" style="left:659px;top:731.2px;font-size:28.5px;line-height:28.5px;color:#111">8 17</div>
<div class="r" style="left:49px;top:837.0px;width:800px;height:2px;background:#dadada"></div>
<div class="r" style="left:4px;top:836.0px;width:41px;height:3px;background:#bfbfbf"></div>
<div class="t" style="left:9px;top:796.0px;font-size:21.5px;line-height:21.5px;color:#2a2a2a">13</div>
<div class="t" style="left:59px;top:791.1px;font-size:28.5px;line-height:28.5px;color:#111">13</div>
<div class="t" style="left:259px;top:791.1px;font-size:28.5px;line-height:28.5px;color:#111">68.2166</div>
<div class="t" style="left:459px;top:791.1px;font-size:28.5px;line-height:28.5px;color:#111">1 5 8</div>
<div class="t" style="left:659px;top:791.1px;font-size:28.5px;line-height:28.5px;color:#111">8 19</div>
<div class="r" style="left:49px;top:896.9px;width:800px;height:2px;background:#dadada"></div>
<div class="r" style="left:4px;top:895.9px;width:41px;height:3px;background:#bfbfbf"></div>
<div class="t" style="left:9px;top:855.8px;font-size:21.5px;line-height:21.5px;color:#2a2a2a">14</div>
<div class="t" style="left:59px;top:850.9px;font-size:28.5px;line-height:28.5px;color:#111">14</div>
<div class="t" style="left:259px;top:850.9px;font-size:28.5px;line-height:28.5px;color:#111">124.92</div>
<div class="t" style="left:459px;top:850.9px;font-size:28.5px;line-height:28.5px;color:#111">8 5 8</div>
<div class="t" style="left:659px;top:850.9px;font-size:28.5px;line-height:28.5px;color:#111">8 23</div>
<div class="r" style="left:49px;top:956.8px;width:800px;height:2px;background:#dadada"></div>
<div class="r" style="left:4px;top:955.8px;width:41px;height:3px;background:#bfbfbf"></div>
<div class="t" style="left:9px;top:915.7px;font-size:21.5px;line-height:21.5px;color:#2a2a2a">15</div>
<div class="t" style="left:59px;top:910.8px;font-size:28.5px;line-height:28.5px;color:#111">15</div>
<div class="t" style="left:259px;top:910.8px;font-size:28.5px;line-height:28.5px;color:#111">113.612</div>
<div class="t" style="left:459px;top:910.8px;font-size:28.5px;line-height:28.5px;color:#111">8 5 2</div>
<div class="t" style="left:659px;top:910.8px;font-size:28.5px;line-height:28.5px;color:#111">8 24</div>
<div class="r" style="left:247px;top:0;width:2px;height:932px;background:#dadada"></div>
<div class="r" style="left:447px;top:0;width:2px;height:932px;background:#dadada"></div>
<div class="r" style="left:647px;top:0;width:2px;height:932px;background:#dadada"></div>
<div class="r" style="left:847px;top:0;width:2px;height:932px;background:#dadada"></div>
</div>
<svg class="r" style="left:2779px;top:1055px" width="38" height="26" viewBox="0 0 38 26"><path d="M2 24 L14 12 L23 20 L36 4" fill="none" stroke="#505050" stroke-width="3.5"/></svg>
<div class="r" style="left:2766px;top:1108px;width:63px;height:64px;background:#d3d3d3;border-radius:8px 8px 0 0"></div>
<svg class="r" style="left:2781px;top:1123px" width="36" height="34" viewBox="0 0 36 34"><rect x="0" y="0" width="36" height="9" rx="3" fill="#505050"/><rect x="0" y="12" width="9" height="22" rx="2" fill="#505050"/><rect x="13" y="12" width="10" height="22" fill="#505050"/><rect x="27" y="12" width="9" height="22" rx="2" fill="#505050"/></svg>
<div class="r" style="left:2770px;top:1184px;width:60px;height:2px;background:repeating-linear-gradient(90deg,#555 0 2px,transparent 2px 6px)"></div>
<svg class="r" style="left:2778px;top:1213px" width="39" height="39" viewBox="0 0 39 39"><path d="M4 0 L28 0 L39 11 L39 35 Q39 39 35 39 L4 39 Q0 39 0 35 L0 4 Q0 0 4 0 Z" fill="#505050"/><rect x="5" y="5" width="23" height="11" fill="#ececec"/><circle cx="19.5" cy="28" r="5" fill="#ececec"/></svg>
<div class="r" style="left:0px;top:2012px;width:2766px;height:1px;background:#b0b0b0"></div>
<div class="r" style="left:0px;top:2017px;width:2830px;height:2px;background:#a3a3a3"></div>
<div class="r" style="left:2177px;top:2019px;width:2px;height:141px;background:#a0a0a0"></div>
<div class="r" style="left:2601px;top:2019px;width:2px;height:141px;background:#a0a0a0"></div>
<div class="r" style="left:2262px;top:2025px;width:2px;height:70px;background:repeating-linear-gradient(#555 0 2px,transparent 2px 8px)"></div>
<div class="r" style="left:2516px;top:2025px;width:2px;height:70px;background:repeating-linear-gradient(#555 0 2px,transparent 2px 8px)"></div>
<svg class="r" style="left:2198px;top:2040px" width="32" height="32" viewBox="0 0 32 32"><rect x="0" y="0" width="5" height="32" fill="#9b9b9b"/><path d="M32 0 L32 32 L9 16 Z" fill="#9b9b9b"/></svg>
<svg class="r" style="left:2286px;top:2040px" width="48" height="32" viewBox="0 0 48 32"><path d="M24 0 L24 32 L0 16 Z M48 0 L48 32 L24 16 Z" fill="#9b9b9b"/></svg>
<svg class="r" style="left:2379px;top:2037px" width="29" height="38" viewBox="0 0 29 38"><path d="M0 0 L29 19 L0 38 Z" fill="#9b9b9b"/></svg>
<svg class="r" style="left:2446px;top:2040px" width="47" height="32" viewBox="0 0 47 32"><path d="M0 0 L23 16 L0 32 Z M24 0 L47 16 L24 32 Z" fill="#9b9b9b"/></svg>
<svg class="r" style="left:2550px;top:2040px" width="32" height="32" viewBox="0 0 32 32"><path d="M0 0 L23 16 L0 32 Z" fill="#9b9b9b"/><rect x="27" y="0" width="5" height="32" fill="#9b9b9b"/></svg>
<svg class="r" style="left:2614px;top:2032px" width="47" height="47" viewBox="0 0 47 47"><circle cx="17" cy="17" r="14" fill="none" stroke="#505050" stroke-width="4.5"/><line x1="27" y1="27" x2="45" y2="45" stroke="#505050" stroke-width="4.5"/></svg>
<svg class="r" style="left:2692px;top:2031px" width="46" height="50" viewBox="0 0 46 50"><path d="M14 48 Q8 48 5 42 L0 30 Q-1 26 3 26 Q6 26 8 30 L11 34 L11 8 Q11 4 14.5 4 Q18 4 18 8 L18 4 Q18 0 21.5 0 Q25 0 25 4 L25 5 Q25 2 28.5 2 Q32 2 32 6 L32 10 Q32 7 35.5 7 Q39 7 39 11 L39 38 Q39 48 30 48 Z" fill="#505050"/><line x1="25" y1="6" x2="25" y2="24" stroke="#9a9a9a" stroke-width="1"/></svg>
<svg class="r" style="left:2763px;top:2038px" width="62" height="34" viewBox="0 0 62 34"><ellipse cx="31" cy="17" rx="29" ry="14" fill="none" stroke="#505050" stroke-width="2.5"/><circle cx="31" cy="17" r="9" fill="#505050"/><path d="M9 2 L19 6 L12 12 Z M53 32 L43 28 L50 22 Z" fill="#505050"/></svg>
<svg class="r" style="left:2191px;top:2113px" width="46" height="26" viewBox="0 0 46 26"><circle cx="12" cy="12" r="12" fill="#9b9b9b"/><circle cx="12" cy="12" r="4.5" fill="#ececec"/><rect x="20" y="8" width="26" height="8" fill="#9b9b9b"/><rect x="32" y="12" width="8" height="14" fill="#9b9b9b"/></svg>
<div class="r" style="left:2260px;top:2106px;width:222px;height:39px;background:#fff;box-sizing:border-box;border:1px solid #dcdcdc"></div>
<div class="t" style="left:2265px;top:2113.1px;font-size:27px;line-height:27px;color:#c0c0c0;font-weight:normal;font-family:'Liberation Sans', sans-serif;">0</div>
<div class="r" style="left:2485px;top:2104px;width:31px;height:21px;background:#f1f1f1;box-sizing:border-box;border:1px solid #d8d8d8"></div>
<div class="r" style="left:2485px;top:2125px;width:31px;height:21px;background:#f1f1f1;box-sizing:border-box;border:1px solid #d8d8d8"></div>
<svg class="r" style="left:2485px;top:2104px" width="31" height="42" viewBox="0 0 31 42"><path d="M8 15 L15.5 7 L23 15 Z" fill="#c4c4c4" stroke="#a8a8a8" stroke-width="1"/><path d="M8 27 L15.5 35 L23 27 Z" fill="#c4c4c4" stroke="#a8a8a8" stroke-width="1"/></svg>
<svg class="r" style="left:2536px;top:2104px" width="44" height="45" viewBox="0 0 44 45"><circle cx="22" cy="22.5" r="19.5" fill="none" stroke="#505050" stroke-width="4"/><path d="M21 12 L21 24 L30 29.5" fill="none" stroke="#505050" stroke-width="3"/></svg>
<svg class="r" style="left:2609px;top:2096px" width="59" height="59" viewBox="0 0 59 59"><path d="M1 14 L1 1 L14 1 M45 1 L58 1 L58 14 M58 45 L58 58 L45 58 M14 58 L1 58 L1 45" fill="none" stroke="#505050" stroke-width="2.5"/><path d="M29.5 8 L52 17 L52 41 L29.5 51 L7 41 L7 17 Z" fill="#505050"/><path d="M13 19 L29.5 12 L46 19 L29.5 26 Z" fill="#ececec"/><path d="M32 29 L47 23 L47 38 L32 45 Z" fill="#ececec"/></svg>
<svg class="r" style="left:2692px;top:2098px" width="47" height="54" viewBox="0 0 47 54"><path d="M3 3 L45 25 L3 49" fill="none" stroke="#505050" stroke-width="4" stroke-linecap="round"/><path d="M23 14 Q16 25 23 36" fill="none" stroke="#505050" stroke-width="3"/></svg>
<div class="r" style="left:2761px;top:2092px;width:68px;height:68px;background:#d1d1d1;border-radius:9px 9px 0 0"></div>
<svg class="r" style="left:2769px;top:2101px" width="52" height="52" viewBox="0 0 52 52"><path d="M2 2 L16 2 L11 7 L18 14 L14 18 L7 11 L2 16 Z M50 2 L36 2 L41 7 L34 14 L38 18 L45 11 L50 16 Z M2 50 L16 50 L11 45 L18 38 L14 34 L7 41 L2 36 Z M50 50 L36 50 L41 45 L34 38 L38 34 L45 41 L50 36 Z" fill="#505050"/></svg>
</div></body></html>
